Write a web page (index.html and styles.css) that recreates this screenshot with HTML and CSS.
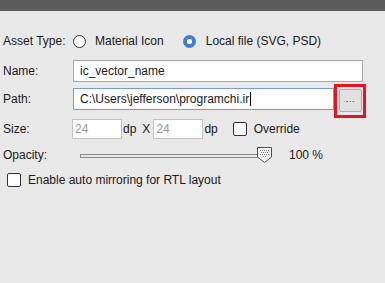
FILE: index.html
```html
<!DOCTYPE html>
<html>
<head>
<meta charset="utf-8">
<link rel="stylesheet" href="styles.css">
</head>
<body>
<div class="titlebar"></div>
<div class="panel">
  <div class="row row-type">
    <span class="label">Asset Type:</span>
    <span class="radio"></span><span class="opt">Material Icon</span>
    <span class="radio checked"></span><span class="opt">Local file (SVG, PSD)</span>
  </div>
  <div class="row row-name">
    <span class="label">Name:</span>
    <div class="input name-input">ic_vector_name</div>
  </div>
  <div class="row row-path">
    <span class="label">Path:</span>
    <div class="input path-input focused">C:\Users\jefferson\programchi.ir<span class="caret"></span></div>
    <div class="browse">...<span class="highlight"></span></div>
  </div>
  <div class="row row-size">
    <span class="label">Size:</span>
    <div class="input small first">24</div><span class="unit">dp</span>
    <span class="x">X</span>
    <div class="input small">24</div><span class="unit">dp</span>
    <span class="check"></span><span class="opt">Override</span>
  </div>
  <div class="row row-opacity">
    <span class="label">Opacity:</span>
    <div class="slider">
      <div class="track"></div>
      <svg class="thumb" width="17" height="18" viewBox="0 0 17 18">
        <path d="M1.5 1.5 H15.5 V11 L8.5 16.5 L1.5 11 Z" fill="#f4f4f4" stroke="#505050" stroke-width="1"/>
        <g fill="#7a7a7a">
          <rect x="4" y="4" width="1" height="1"/><rect x="6" y="4" width="1" height="1"/><rect x="8" y="4" width="1" height="1"/><rect x="10" y="4" width="1" height="1"/><rect x="12" y="4" width="1" height="1"/>
          <rect x="5" y="6" width="1" height="1"/><rect x="7" y="6" width="1" height="1"/><rect x="9" y="6" width="1" height="1"/><rect x="11" y="6" width="1" height="1"/>
          <rect x="4" y="8" width="1" height="1"/><rect x="6" y="8" width="1" height="1"/><rect x="8" y="8" width="1" height="1"/><rect x="10" y="8" width="1" height="1"/><rect x="12" y="8" width="1" height="1"/>
          <rect x="7" y="10" width="1" height="1"/><rect x="9" y="10" width="1" height="1"/>
        </g>
      </svg>
    </div>
    <span class="pct">100 %</span>
  </div>
  <div class="row row-mirror">
    <span class="check"></span><span class="opt">Enable auto mirroring for RTL layout</span>
  </div>
</div>
</body>
</html>
```
FILE: styles.css
```css
html, body {
  margin: 0;
  padding: 0;
  background: #e9e9e9;
}
body {
  width: 385px;
  height: 283px;
  overflow: hidden;
  font-family: "Liberation Sans", Arial, sans-serif;
  font-size: 12px;
  color: #1a1a1a;
}
.titlebar {
  height: 11px;
  background: #5a5a5a;
}
.panel {
  padding: 0 0 0 3px;
  display: flex;
  flex-direction: column;
}
.row {
  display: flex;
  align-items: center;
}
.label {
  width: 70px;
  flex: none;
}
.row-type {
  margin-top: 23px;
  height: 14px;
}
.radio {
  width: 13px;
  height: 13px;
  border: 1px solid #333;
  border-radius: 50%;
  background: #fff;
  flex: none;
  margin-right: 9px;
  box-sizing: border-box;
}
.radio.checked {
  border: none;
  background: radial-gradient(circle, #ffffff 0 2.5px, #3c7fd9 3px);
  margin-left: 19px;
  margin-right: 10px;
}
.opt {
  white-space: nowrap;
}
.input {
  box-sizing: border-box;
  background: #fff;
  border: 1px solid #a8a8a8;
  height: 22px;
  padding: 0 6px;
  display: flex;
  align-items: center;
  white-space: nowrap;
}
.row-name {
  margin-top: 12px;
}
.name-input {
  width: 290px;
}
.row-path {
  margin-top: 6px;
  height: 22px;
  align-items: flex-start;
}
.row-path .label {
  align-self: center;
}
.path-input {
  width: 261px;
}
.path-input.focused {
  border-color: #6e9fd8;
}
.caret {
  display: inline-block;
  width: 1px;
  height: 14px;
  background: #000;
  margin-left: 1px;
}
.browse {
  position: relative;
  margin-left: 5px;
  margin-top: 1px;
  width: 23px;
  height: 23px;
  box-sizing: border-box;
  border: 1px solid #adadad;
  border-radius: 2px;
  background: #e1e1e1;
  display: flex;
  align-items: center;
  justify-content: center;
  font-size: 9px;
  color: #333;
  letter-spacing: 0.5px;
  padding-bottom: 3px;
  flex: none;
}
.highlight {
  position: absolute;
  left: -6px;
  top: -6px;
  width: 32px;
  height: 34px;
  box-sizing: border-box;
  border: 3px solid #e8141b;
}
.row-size {
  margin-top: 9px;
}
.input.small {
  width: 50px;
  height: 20px;
  padding: 0 2px;
  color: #9a9a9a;
  border-color: #c2c2c2;
}
.input.small.first {
  margin-left: -1px;
}
.unit {
  margin-left: 1px;
}
.x {
  margin: 0 3px 0 6px;
}
.check {
  width: 14px;
  height: 14px;
  box-sizing: border-box;
  border: 1px solid #333;
  border-radius: 2px;
  background: #fff;
  flex: none;
}
.row-size .check {
  margin-left: 15px;
  margin-right: 7px;
}
.row-opacity {
  margin-top: 7px;
  height: 18px;
}
.slider {
  position: relative;
  width: 195px;
  height: 18px;
  margin-left: 7px;
  display: flex;
  align-items: center;
}
.track {
  width: 184px;
  height: 4px;
  box-sizing: border-box;
  border: 1px solid #8a8a8a;
  background: #e7e7e7;
  margin-top: 1px;
}
.thumb {
  position: absolute;
  left: 176px;
  top: 0;
}
.pct {
  margin-left: 14px;
}
.row-mirror {
  margin-top: 9px;
  padding-left: 4px;
}
.row-mirror .check {
  margin-right: 7px;
}
```
